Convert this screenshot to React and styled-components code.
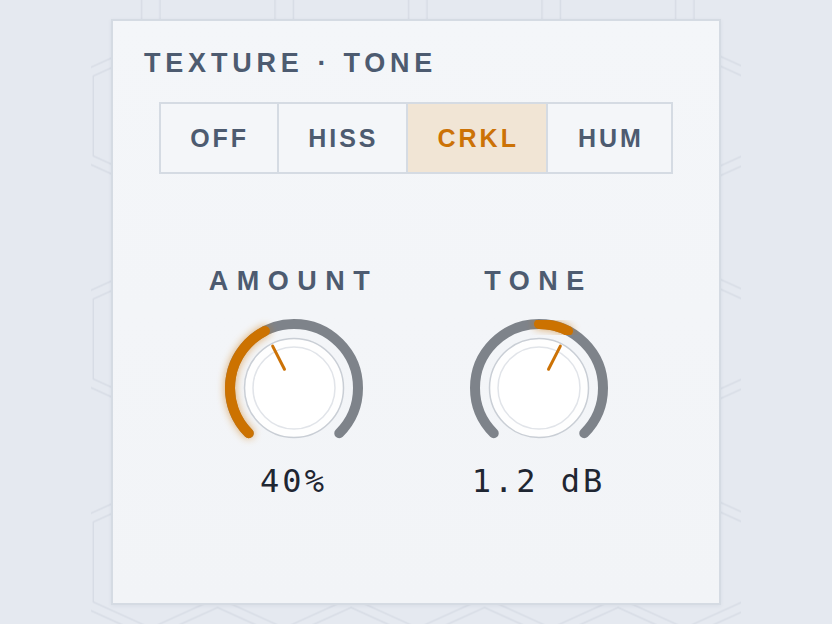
import React, { useId, useState } from "react";
import styled, { createGlobalStyle } from "styled-components";

const ORANGE = "#cc7206";
const SLATE = "#4d5b70";

const GlobalStyle = createGlobalStyle`
  html, body {
    margin: 0;
    padding: 0;
  }
  body {
    background: #e5e9f0;
    font-family: "Liberation Sans", Arial, sans-serif;
  }
`;

const Page = styled.div`
  min-height: 100vh;
  display: flex;
  align-items: center;
  justify-content: center;
`;

const Frame = styled.div`
  position: relative;
`;

const HexBackdrop = styled.svg`
  position: absolute;
  left: -20px;
  top: -20px;
  width: calc(100% + 40px);
  height: calc(100% + 40px);
  pointer-events: none;
`;

const Panel = styled.section`
  position: relative;
  box-sizing: border-box;
  width: 610px;
  height: 586px;
  padding-top: 26px;
  display: flex;
  flex-direction: column;
  background: linear-gradient(180deg, #f4f6f9 0%, #f2f4f7 100%);
  border: 2px solid #d5dbe3;
  box-shadow: 0 1px 4px rgba(40, 55, 80, 0.06);
`;

const Title = styled.h2`
  margin: 0;
  padding-left: 31px;
  font-size: 27px;
  line-height: 32px;
  font-weight: 700;
  letter-spacing: 4.8px;
  color: ${SLATE};
`;

const Dot = styled.span`
  margin: 0 12px 0 14px;
`;

const Modes = styled.div`
  align-self: center;
  margin-top: 23px;
  display: flex;
  height: 72px;
  box-sizing: border-box;
  border: 2px solid #d5dbe3;
`;

const Mode = styled.button`
  appearance: none;
  margin: 0;
  padding: 0 27.5px 0 29.5px;
  border: none;
  border-left: ${(p) => (p.$first ? "none" : "2px solid #d5dbe3")};
  background: ${(p) => (p.$active ? "#f1e5d5" : "#f4f6f9")};
  color: ${(p) => (p.$active ? ORANGE : SLATE)};
  font-family: inherit;
  font-size: 25px;
  font-weight: 700;
  letter-spacing: 3px;
  cursor: pointer;
`;

const KnobRow = styled.div`
  align-self: center;
  margin-top: 91px;
  display: flex;
  gap: 75px;
`;

const KnobCol = styled.div`
  width: 170px;
  display: flex;
  flex-direction: column;
  align-items: center;
`;

const KnobLabel = styled.div`
  font-size: 27px;
  line-height: 32px;
  font-weight: 700;
  letter-spacing: 8.5px;
  color: ${SLATE};
`;

const Dial = styled.svg`
  display: block;
  overflow: visible;
  margin-top: 21px;
`;

const Readout = styled.div`
  margin-top: 5px;
  font-family: "DejaVu Sans Mono", "Liberation Mono", monospace;
  font-size: 32px;
  line-height: 36px;
  letter-spacing: 3px;
  color: #1f2632;
`;

const MODES = ["OFF", "HISS", "CRKL", "HUM"];

const KNOBS = [
  { label: "AMOUNT", value: 0.4, display: "40%", bipolar: false },
  { label: "TONE", value: 1.2 / 6, display: "1.2 dB", bipolar: true },
];

// hexagon outline, pointy top
const hex = (cx, cy) => {
  const w = 57.5;
  const s = 40;
  const t = 66;
  return `M${cx} ${cy - t}L${cx + w} ${cy - s}L${cx + w} ${cy + s}L${cx} ${cy + t}L${cx - w} ${cy + s}L${cx - w} ${cy - s}Z`;
};

function Backdrop() {
  return (
    <HexBackdrop aria-hidden="true">
      <defs>
        <pattern id="hexgrid" width="133.5" height="223" x="59.75" y="5.5" patternUnits="userSpaceOnUse">
          <path
            d={[hex(66.75, 0), hex(66.75, 223), hex(0, 111.5), hex(133.5, 111.5)].join("")}
            fill="none"
            stroke="#d7dce5"
            strokeWidth="1.4"
          />
        </pattern>
      </defs>
      <rect width="100%" height="100%" fill="url(#hexgrid)" />
    </HexBackdrop>
  );
}

const C = 70;
const R = 64;

const pt = (r, a) => {
  const rad = (a * Math.PI) / 180;
  return [C + r * Math.sin(rad), C - r * Math.cos(rad)];
};

const arc = (r, a0, a1) => {
  const [x0, y0] = pt(r, a0);
  const [x1, y1] = pt(r, a1);
  const large = a1 - a0 > 180 ? 1 : 0;
  return `M${x0} ${y0}A${r} ${r} 0 ${large} 1 ${x1} ${y1}`;
};

function Knob({ label, value, display, bipolar }) {
  const glow = useId().replace(/:/g, "");
  const angle = bipolar ? value * 135 : -135 + value * 270;
  const from = bipolar ? Math.min(0, angle) : -135;
  const to = bipolar ? Math.max(0, angle) : angle;
  const [px0, py0] = pt(21, angle);
  const [px1, py1] = pt(47, angle);

  return (
    <KnobCol>
      <KnobLabel>{label}</KnobLabel>
      <Dial width="140" height="140" viewBox="0 0 140 140">
        <defs>
          <filter id={glow} x="-50%" y="-50%" width="200%" height="200%">
            <feGaussianBlur stdDeviation="4" result="b" />
            <feComponentTransfer in="b" result="soft">
              <feFuncA type="linear" slope="0.6" />
            </feComponentTransfer>
            <feMerge>
              <feMergeNode in="soft" />
              <feMergeNode in="SourceGraphic" />
            </feMerge>
          </filter>
        </defs>
        <path d={arc(R, -135, 135)} fill="none" stroke="#7e838a" strokeWidth="10" strokeLinecap="round" />
        <path
          d={arc(R, from, to)}
          fill="none"
          stroke={ORANGE}
          strokeWidth="10"
          strokeLinecap="round"
          filter={`url(#${glow})`}
        />
        <circle cx={C} cy={C} r="49.5" fill="#fefefe" stroke="#c9ced5" strokeWidth="1.5" />
        <circle cx={C} cy={C} r="41" fill="#ffffff" stroke="#e1e4e9" strokeWidth="1.5" />
        <line x1={px0} y1={py0} x2={px1} y2={py1} stroke={ORANGE} strokeWidth="3" strokeLinecap="round" />
      </Dial>
      <Readout>{display}</Readout>
    </KnobCol>
  );
}

export default function App() {
  const [mode, setMode] = useState("CRKL");

  return (
    <>
      <GlobalStyle />
      <Page>
        <Frame>
          <Backdrop />
          <Panel>
            <Title>
              TEXTURE<Dot>·</Dot>TONE
            </Title>
            <Modes>
              {MODES.map((m, i) => (
                <Mode key={m} $first={i === 0} $active={m === mode} onClick={() => setMode(m)}>
                  {m}
                </Mode>
              ))}
            </Modes>
            <KnobRow>
              {KNOBS.map((k) => (
                <Knob key={k.label} {...k} />
              ))}
            </KnobRow>
          </Panel>
        </Frame>
      </Page>
    </>
  );
}
